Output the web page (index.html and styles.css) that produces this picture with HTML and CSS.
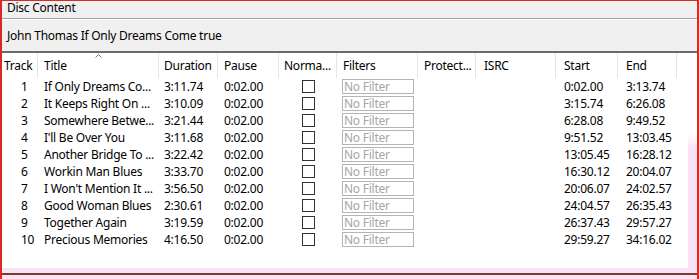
FILE: index.html
```html
<!DOCTYPE html>
<html lang="en">
<head>
    <meta charset="UTF-8">
    <title>Disc Content</title>
    <link rel="stylesheet" href="styles.css">
</head>
<body>
    <div class="window">
        <div class="group-label">Disc Content</div>
        <div class="disc-title">John Thomas If Only Dreams Come true</div>

        <div class="list-area">
            <div class="grid">
                <!-- header -->
                <div class="hd hd-track">Track</div>
                <div class="hd hd-title">
                    <svg class="sort" width="7" height="4" viewBox="0 0 7 4"><path d="M0.5 3.5 L3.5 0.5 L6.5 3.5" fill="none" stroke="#7a7a7a" stroke-width="1"/></svg>
                    Title
                </div>
                <div class="hd hd-5">Duration</div>
                <div class="hd">Pause</div>
                <div class="hd hd-5">Norma...</div>
                <div class="hd">Filters</div>
                <div class="hd">Protect...</div>
                <div class="hd hd-8">ISRC</div>
                <div class="hd hd-8">Start</div>
                <div class="hd hd-8">End</div>

                <!-- rows -->
                <div class="c num">1</div><div class="c">If Only Dreams Co...</div><div class="c c-5">3:11.74</div><div class="c">0:02.00</div><div class="chk"><span class="box"></span></div><div class="flt"><span class="filter">No Filter</span></div><div class="c"></div><div class="c"></div><div class="c c-8">0:02.00</div><div class="c c-8">3:13.74</div>
                <div class="c num">2</div><div class="c">It Keeps Right On ...</div><div class="c c-5">3:10.09</div><div class="c">0:02.00</div><div class="chk"><span class="box"></span></div><div class="flt"><span class="filter">No Filter</span></div><div class="c"></div><div class="c"></div><div class="c c-8">3:15.74</div><div class="c c-8">6:26.08</div>
                <div class="c num">3</div><div class="c">Somewhere Betwe...</div><div class="c c-5">3:21.44</div><div class="c">0:02.00</div><div class="chk"><span class="box"></span></div><div class="flt"><span class="filter">No Filter</span></div><div class="c"></div><div class="c"></div><div class="c c-8">6:28.08</div><div class="c c-8">9:49.52</div>
                <div class="c num">4</div><div class="c">I'll Be Over You</div><div class="c c-5">3:11.68</div><div class="c">0:02.00</div><div class="chk"><span class="box"></span></div><div class="flt"><span class="filter">No Filter</span></div><div class="c"></div><div class="c"></div><div class="c c-8">9:51.52</div><div class="c c-8">13:03.45</div>
                <div class="c num">5</div><div class="c">Another Bridge To ...</div><div class="c c-5">3:22.42</div><div class="c">0:02.00</div><div class="chk"><span class="box"></span></div><div class="flt"><span class="filter">No Filter</span></div><div class="c"></div><div class="c"></div><div class="c c-8">13:05.45</div><div class="c c-8">16:28.12</div>
                <div class="c num">6</div><div class="c">Workin Man Blues</div><div class="c c-5">3:33.70</div><div class="c">0:02.00</div><div class="chk"><span class="box"></span></div><div class="flt"><span class="filter">No Filter</span></div><div class="c"></div><div class="c"></div><div class="c c-8">16:30.12</div><div class="c c-8">20:04.07</div>
                <div class="c num">7</div><div class="c">I Won't Mention It ...</div><div class="c c-5">3:56.50</div><div class="c">0:02.00</div><div class="chk"><span class="box"></span></div><div class="flt"><span class="filter">No Filter</span></div><div class="c"></div><div class="c"></div><div class="c c-8">20:06.07</div><div class="c c-8">24:02.57</div>
                <div class="c num">8</div><div class="c">Good Woman Blues</div><div class="c c-5">2:30.61</div><div class="c">0:02.00</div><div class="chk"><span class="box"></span></div><div class="flt"><span class="filter">No Filter</span></div><div class="c"></div><div class="c"></div><div class="c c-8">24:04.57</div><div class="c c-8">26:35.43</div>
                <div class="c num">9</div><div class="c">Together Again</div><div class="c c-5">3:19.59</div><div class="c">0:02.00</div><div class="chk"><span class="box"></span></div><div class="flt"><span class="filter">No Filter</span></div><div class="c"></div><div class="c"></div><div class="c c-8">26:37.43</div><div class="c c-8">29:57.27</div>
                <div class="c num">10</div><div class="c">Precious Memories</div><div class="c c-5">4:16.50</div><div class="c">0:02.00</div><div class="chk"><span class="box"></span></div><div class="flt"><span class="filter">No Filter</span></div><div class="c"></div><div class="c"></div><div class="c c-8">29:59.27</div><div class="c c-8">34:16.02</div>
            </div>
            <div class="pink-side"></div>
        </div>
        <div class="pink-bottom"></div>
    </div>
</body>
</html>
```

FILE: styles.css
```css
body {
    margin: 0;
    font-family: "Noto Sans", sans-serif;
    font-size: 12px;
    letter-spacing: -0.25px;
    color: #000;
    background: #fff;
}
.window {
    width: 699px;
    height: 279px;
    box-sizing: border-box;
    border-top: 1px solid #d62a22;
    border-left: 2px solid #d62a22;
    border-right: 2px solid #d62a22;
    background-color: #f0f0f0;
    display: flex;
    flex-direction: column;
    overflow: hidden;
}
.group-label {
    height: 17px;
    line-height: 13px;
    padding-left: 5px;
    border-bottom: 1px solid #a0a0a0;
    white-space: nowrap;
}
.disc-title {
    height: 31px;
    line-height: 31px;
    padding-left: 5px;
    border-top: 1px solid #fff;
    border-bottom: 2px solid #6b6b6b;
    white-space: nowrap;
}
.list-area {
    flex: 1;
    display: flex;
    background-color: #fff;
}
.grid {
    flex: 1;
    display: grid;
    grid-template-columns: 36px 121px 59px 61px 58px 81px 58px 80px 62px 59px;
    grid-template-rows: 25px;
    grid-auto-rows: 17px;
    align-content: start;
}
.hd {
    position: relative;
    box-sizing: border-box;
    border-right: 1px solid #e5e5e5;
    padding: 4px 0 0 6px;
    line-height: 17px;
    white-space: nowrap;
    overflow: hidden;
}
.hd-track {
    padding-left: 2px;
}
.hd-5 {
    padding-left: 5px;
}
.hd-8 {
    padding-left: 8px;
}
.sort {
    position: absolute;
    top: 1px;
    left: 57px;
}
.c {
    line-height: 17px;
    padding-left: 6px;
    white-space: nowrap;
    overflow: hidden;
}
.num {
    padding-left: 19px;
}
.c-5 {
    padding-left: 5px;
}
.c-8 {
    padding-left: 8px;
}
.chk {
    display: flex;
    justify-content: center;
    padding-top: 2px;
}
.box {
    width: 13px;
    height: 13px;
    box-sizing: border-box;
    border: 1px solid #333;
    background: #fff;
}
.flt {
    padding: 1px 0 0 5px;
}
.filter {
    display: block;
    width: 72px;
    height: 15px;
    box-sizing: border-box;
    border: 1px solid #b4b4b4;
    padding-left: 1px;
    line-height: 13px;
    color: #a6a6a6;
    white-space: nowrap;
}
.pink-side {
    width: 9px;
    background: linear-gradient(to bottom, #fff 0, #fff 80px, #fbe3f7 95px);
}
.pink-bottom {
    height: 11px;
    box-sizing: border-box;
    border-top: 5px solid #fbe3f7;
    border-bottom: 4px solid #fbe3f7;
    background-color: #7d3b2b;
}
```
